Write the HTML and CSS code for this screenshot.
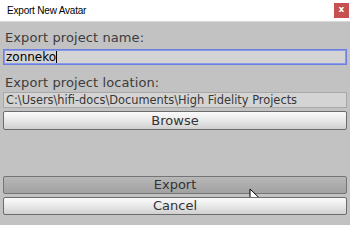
FILE: index.html
```html
<!DOCTYPE html>
<html>
<head>
<meta charset="utf-8">
<link rel="stylesheet" href="styles.css">
</head>
<body>
<div class="window">
  <div class="titlebar">
    <span class="title">Export New Avatar</span>
    <span class="close">x</span>
  </div>
  <div class="content">
    <div class="label">Export project name:</div>
    <div class="input"><span>zonneko</span><span class="caret"></span></div>
    <div class="label second">Export project location:</div>
    <div class="field">C:\Users\hifi-docs\Documents\High Fidelity Projects</div>
    <div class="btn browse">Browse</div>
    <div class="spacer"></div>
    <div class="btn hover">Export
      <svg class="cursor" width="14" height="21" viewBox="0 0 14 21"><path d="M1 1 L1 16 L4.8 12.3 L7.3 18.3 L9.5 17.3 L7 11.6 L12 11.6 Z" fill="#fff" stroke="#000" stroke-width="1"/></svg>
    </div>
    <div class="btn">Cancel</div>
  </div>
</div>
</body>
</html>
```
FILE: styles.css
```css
* { box-sizing: border-box; }
html, body { margin: 0; padding: 0; }
body { width: 350px; height: 225px; overflow: hidden; background: #c2c2c2; font-family: "DejaVu Sans", Verdana, sans-serif; }
.window { display: flex; flex-direction: column; height: 225px; }
.titlebar { height: 22px; background: #fff; display: flex; align-items: center; justify-content: space-between; padding: 0 1px 0 7px; border-bottom: 1px solid #d8d8d8; }
.title { font-family: "Liberation Sans", Tahoma, sans-serif; font-size: 10px; color: #000; letter-spacing: -0.2px; }
.close { width: 15px; height: 15px; background: #c75050; color: #fff; font-family: "DejaVu Sans", sans-serif; font-weight: bold; font-size: 9px; display: flex; align-items: center; justify-content: center; line-height: 1; padding-bottom: 2px; }
.content { flex: 1; display: flex; flex-direction: column; padding: 5px 3px 10px 3px; }
.label { font-size: 13px; color: #3c3c3c; height: 22px; line-height: 22px; padding-left: 2px; letter-spacing: 0.1px; }
.label.second { margin-top: 8px; height: 19px; line-height: 19px; }
.input { height: 16px; border: 1px solid #6b7fe0; box-shadow: inset 0 0 0 1px #8a9ae8; background: #d4d4d4; font-size: 12px; color: #000; display: flex; align-items: center; padding-left: 2px; line-height: 14px; }
.caret { display: inline-block; width: 1px; height: 12px; background: #000; }
.field { height: 16px; border: 1px solid #a8a8a8; background: #d4d4d4; font-size: 11.4px; color: #383838; padding-left: 2px; line-height: 14px; white-space: nowrap; overflow: hidden; }
.btn { position: relative; margin-top: 3px; height: 18px; border: 1px solid #6c6c6c; border-radius: 2px; background: linear-gradient(#fbfbfb, #e8e8e8 50%, #d0d0d0); font-size: 13px; color: #333; text-align: center; line-height: 16px; }
.btn.browse { height: 19px; line-height: 17px; }
.spacer { flex: 1; }
.btn.hover { background: linear-gradient(#b8b8b8, #aaaaaa 60%, #a2a2a2); border-color: #757575; }
.cursor { position: absolute; left: 245px; top: 11px; }
```
